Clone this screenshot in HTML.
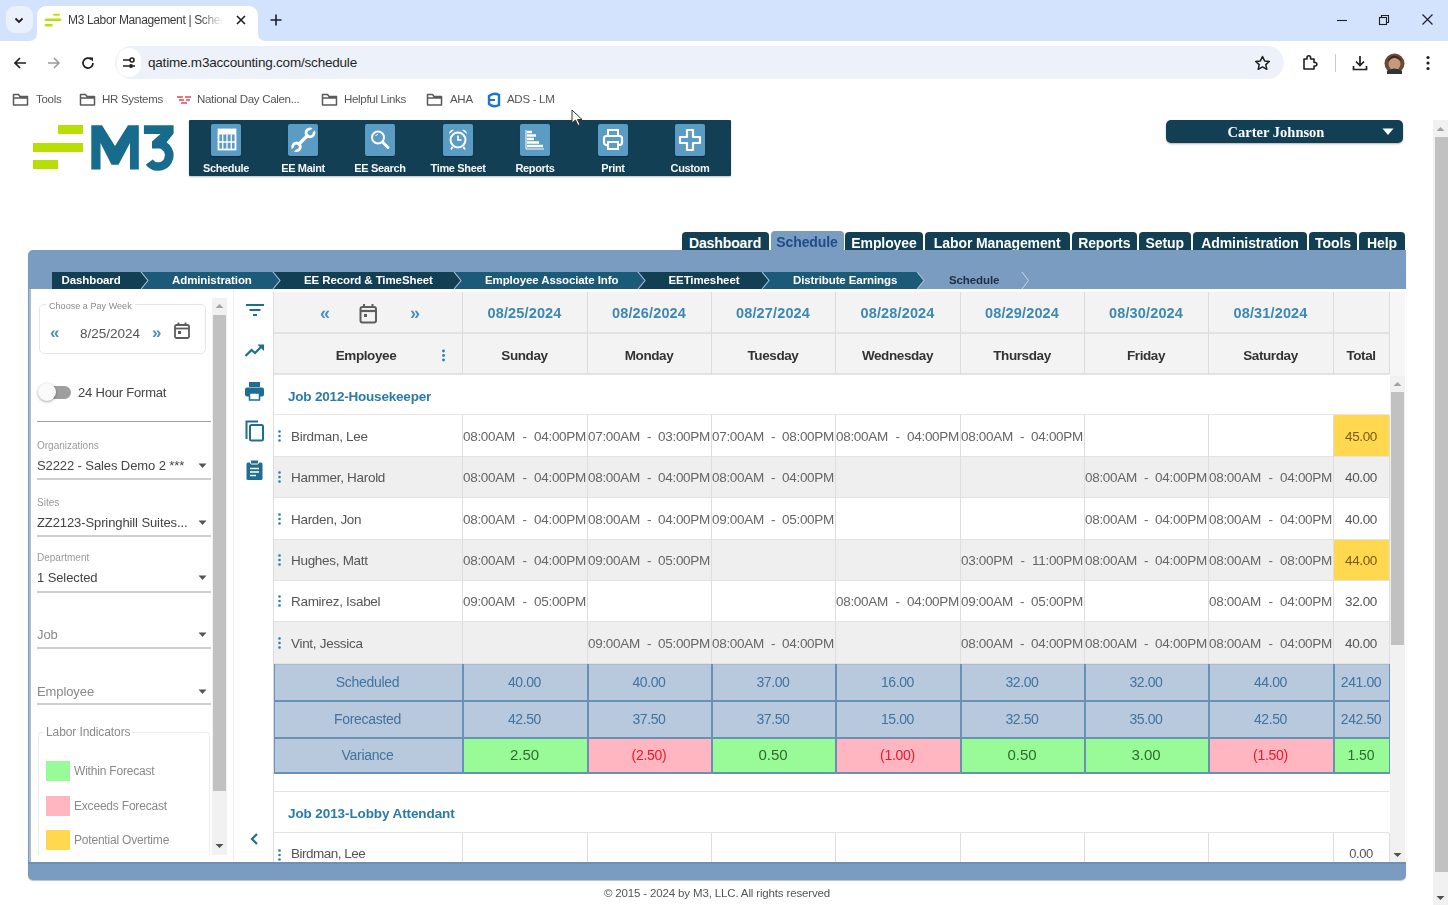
<!DOCTYPE html>
<html><head><meta charset="utf-8"><title>M3 Labor Management | Schedule</title><style>
*{box-sizing:border-box}
html,body{margin:0;padding:0}
body{width:1448px;height:905px;overflow:hidden;position:relative;background:#fff;font-family:"Liberation Sans",sans-serif;filter:blur(0.4px)}
.abs{position:absolute}
.t{white-space:nowrap}
.c{text-align:center}
.tm{display:flex;justify-content:space-between;font-size:13.5px;color:#666;letter-spacing:-0.3px;line-height:16px}
</style></head>
<body>
<div class="abs" style="left:0;top:0;width:1448px;height:41px;background:#d3e3fd"></div>
<div class="abs" style="left:6px;top:6px;width:27px;height:27px;border-radius:9px;background:#eaf0fc"></div>
<svg class="abs" style="left:12px;top:13px" width="14" height="14" viewBox="0 0 14 14"><path d="M3.5 5.5 L7 9 L10.5 5.5" fill="none" stroke="#1f1f1f" stroke-width="1.8"/></svg>
<div class="abs" style="left:37px;top:6px;width:221px;height:35px;border-radius:9px 9px 0 0;background:#fff"></div>
<svg class="abs" style="left:29px;top:33px" width="8" height="8"><path d="M0 8 Q8 8 8 0 L8 8 Z" fill="#fff"/></svg>
<svg class="abs" style="left:258px;top:33px" width="8" height="8"><path d="M8 8 Q0 8 0 0 L0 8 Z" fill="#fff"/></svg>
<svg class="abs" style="left:44px;top:12px" width="18" height="16"><rect x="9" y="1.7" width="7" height="2" rx="1" fill="#b9e00a"/><rect x="0.7" y="6.6" width="16.6" height="2.5" rx="1" fill="#b9e00a"/><rect x="0.7" y="12" width="8" height="2.5" rx="1" fill="#b9e00a"/></svg>
<div class="abs t" style="left:68px;top:13px;font-size:12px;color:#3b3b3b;letter-spacing:-0.35px;white-space:nowrap;width:155px;overflow:hidden;-webkit-mask-image:linear-gradient(90deg,#000 85%,transparent)">M3 Labor Management | Schedule</div>
<svg class="abs" style="left:235px;top:14px" width="12" height="12"><path d="M2 2 L10 10 M10 2 L2 10" stroke="#1f1f1f" stroke-width="1.6"/></svg>
<svg class="abs" style="left:269px;top:13px" width="14" height="14"><path d="M7 1.5 V12.5 M1.5 7 H12.5" stroke="#1f1f1f" stroke-width="1.6"/></svg>
<svg class="abs" style="left:1336px;top:14px" width="12" height="12"><path d="M1 6.5 H11" stroke="#1f1f1f" stroke-width="1.1"/></svg>
<svg class="abs" style="left:1378px;top:14px" width="12" height="12"><rect x="1.5" y="3.5" width="7" height="7" fill="none" stroke="#1f1f1f" stroke-width="1.1"/><path d="M3.5 3.5 V1.5 H10.5 V8.5 H8.5" fill="none" stroke="#1f1f1f" stroke-width="1.1"/></svg>
<svg class="abs" style="left:1421px;top:13px" width="13" height="13"><path d="M1.5 1.5 L11.5 11.5 M11.5 1.5 L1.5 11.5" stroke="#1f1f1f" stroke-width="1.2"/></svg>
<div class="abs" style="left:0;top:41px;width:1448px;height:43px;background:#fff"></div>
<svg class="abs" style="left:12px;top:55px" width="16" height="16"><path d="M14 8 H3 M8 3 L3 8 L8 13" fill="none" stroke="#1f1f1f" stroke-width="1.7"/></svg>
<svg class="abs" style="left:46px;top:55px" width="16" height="16"><path d="M2 8 H13 M8 3 L13 8 L8 13" fill="none" stroke="#9a9a9a" stroke-width="1.5"/></svg>
<svg class="abs" style="left:80px;top:55px" width="16" height="16"><path d="M13 8 A5 5 0 1 1 11.3 4.3" fill="none" stroke="#1f1f1f" stroke-width="1.7"/><path d="M9 2.5 L13 2.5 L13 6.5 Z" fill="#1f1f1f"/></svg>
<div class="abs" style="left:115px;top:46px;width:1169px;height:33px;border-radius:17px;background:#edf2fa"></div>
<div class="abs" style="left:117px;top:48px;width:24px;height:29px;border-radius:14px;background:#fff"></div>
<svg class="abs" style="left:121px;top:55px" width="16" height="16"><path d="M2 5 H9 M12 11 H14 M2 11 H8" stroke="#1f1f1f" stroke-width="1.6"/><circle cx="11" cy="5" r="2" fill="none" stroke="#1f1f1f" stroke-width="1.6"/><circle cx="10" cy="11" r="2" fill="#1f1f1f"/></svg>
<div class="abs t" style="left:148px;top:55px;font-size:13.5px;color:#1f1f1f;letter-spacing:-0.2px">qatime.m3accounting.com/schedule</div>
<svg class="abs" style="left:1254px;top:55px" width="17" height="16"><path d="M8.5 1.5 L10.6 5.9 L15.3 6.4 L11.8 9.6 L12.8 14.3 L8.5 11.9 L4.2 14.3 L5.2 9.6 L1.7 6.4 L6.4 5.9 Z" fill="none" stroke="#1f1f1f" stroke-width="1.5" stroke-linejoin="round"/></svg>
<svg class="abs" style="left:1301px;top:54px" width="18" height="18"><path d="M3 5 H6 V3.5 A1.8 1.8 0 0 1 9.6 3.5 V5 H13 V8.5 H14.5 A1.8 1.8 0 0 1 14.5 12 H13 V15 H3 Z" fill="none" stroke="#1f1f1f" stroke-width="1.6" stroke-linejoin="round"/></svg>
<div class="abs" style="left:1335px;top:54px;width:1px;height:18px;background:#c7cdd8"></div>
<svg class="abs" style="left:1351px;top:54px" width="18" height="18"><path d="M9 2 V11 M5 7.5 L9 11.5 L13 7.5 M2.5 12 V15.5 H15.5 V12" fill="none" stroke="#1f1f1f" stroke-width="1.7"/></svg>
<svg class="abs" style="left:1384px;top:53px" width="21" height="21"><circle cx="10.5" cy="10.5" r="10" fill="#6b4a36"/><circle cx="10.5" cy="11" r="6" fill="#c79a7a"/><path d="M4 8 Q10.5 1 17 8 L17 6 Q10.5 -1 4 6 Z" fill="#3a2a20"/><path d="M3 18 Q10.5 13 18 18 L18 21 H3 Z" fill="#2e3440"/></svg>
<svg class="abs" style="left:1424px;top:54px" width="8" height="18"><circle cx="4" cy="3.5" r="1.6" fill="#1f1f1f"/><circle cx="4" cy="9" r="1.6" fill="#1f1f1f"/><circle cx="4" cy="14.5" r="1.6" fill="#1f1f1f"/></svg>
<svg class="abs" style="left:12px;top:92px" width="17" height="15"><path d="M1.5 2.5 H6.5 L8 4.5 H15.5 V13 H1.5 Z M1.5 6 H15.5" fill="none" stroke="#5a5a5a" stroke-width="1.5" stroke-linejoin="round"/></svg>
<div class="abs t" style="left:36px;top:93px;font-size:11.5px;color:#555;letter-spacing:-0.3px;white-space:nowrap">Tools</div>
<svg class="abs" style="left:79px;top:92px" width="17" height="15"><path d="M1.5 2.5 H6.5 L8 4.5 H15.5 V13 H1.5 Z M1.5 6 H15.5" fill="none" stroke="#5a5a5a" stroke-width="1.5" stroke-linejoin="round"/></svg>
<div class="abs t" style="left:102px;top:93px;font-size:11.5px;color:#555;letter-spacing:-0.3px;white-space:nowrap">HR Systems</div>
<svg class="abs" style="left:176px;top:94px" width="16" height="12"><path d="M1 3 H7 M9 3 H15 M3 6 H8 M10 6 H14 M5 9 H11" stroke="#e8474f" stroke-width="1.6"/></svg>
<div class="abs t" style="left:197px;top:93px;font-size:11.5px;color:#555;letter-spacing:-0.3px;white-space:nowrap">National Day Calen...</div>
<svg class="abs" style="left:321px;top:92px" width="17" height="15"><path d="M1.5 2.5 H6.5 L8 4.5 H15.5 V13 H1.5 Z M1.5 6 H15.5" fill="none" stroke="#5a5a5a" stroke-width="1.5" stroke-linejoin="round"/></svg>
<div class="abs t" style="left:344px;top:93px;font-size:11.5px;color:#555;letter-spacing:-0.3px;white-space:nowrap">Helpful Links</div>
<svg class="abs" style="left:426px;top:92px" width="17" height="15"><path d="M1.5 2.5 H6.5 L8 4.5 H15.5 V13 H1.5 Z M1.5 6 H15.5" fill="none" stroke="#5a5a5a" stroke-width="1.5" stroke-linejoin="round"/></svg>
<div class="abs t" style="left:450px;top:93px;font-size:11.5px;color:#555;letter-spacing:-0.3px;white-space:nowrap">AHA</div>
<svg class="abs" style="left:486px;top:92px" width="16" height="16"><path d="M3 4 Q8 0 13 3 L13 13 Q8 16 3 12 Z" fill="none" stroke="#1976d2" stroke-width="2.4"/><path d="M3 8 H9" stroke="#1976d2" stroke-width="2"/></svg>
<div class="abs t" style="left:507px;top:93px;font-size:11.5px;color:#555;letter-spacing:-0.3px;white-space:nowrap">ADS - LM</div>
<div class="abs" style="left:1433px;top:120px;width:15px;height:785px;background:#f1f1f1"></div>
<div class="abs" style="left:1435px;top:137px;width:13px;height:735px;background:#c1c1c1"></div>
<svg class="abs" style="left:1436px;top:126px" width="9" height="6"><path d="M0.5 5 L4.5 1 L8.5 5 Z" fill="#a3a3a3"/></svg>
<svg class="abs" style="left:1436px;top:895px" width="9" height="6"><path d="M0.5 1 L4.5 5 L8.5 1 Z" fill="#505050"/></svg>
<div class="abs" style="left:58px;top:125px;width:25px;height:9px;background:#b9de05"></div>
<div class="abs" style="left:33px;top:143px;width:50px;height:9px;background:#b9de05"></div>
<div class="abs" style="left:33px;top:160px;width:25px;height:9px;background:#b9de05"></div>
<svg class="abs" style="left:85px;top:120px" width="95" height="55" viewBox="85 120 95 55"><path d="M91.3 169.4 V125.2 H102 L115 146 L128 125.2 H138.8 V169.4 H130 V143 L118.5 164.7 H111.5 L100.5 143 V169.4 Z" fill="#176b8d"/><path d="M143.9 125.2 H173.6 V133.5 L164 145.5 L158 148.5 L152 148.5 L152 141.5 L160.5 134 H143.9 Z" fill="#176b8d"/><path d="M159 144.2 A11.2 11.2 0 1 1 149.2 162.2" fill="none" stroke="#176b8d" stroke-width="8.6"/></svg>
<div class="abs" style="left:189px;top:120px;width:542px;height:56px;background:#133f55;border-radius:1px;box-shadow:0 1px 2px rgba(0,0,0,.25)"></div>
<div class="abs" style="left:211px;top:124px;width:30px;height:32px;background:#5b9cc4;border-radius:2px;box-shadow:0 1px 1px rgba(0,0,0,.35)"></div>
<svg class="abs" style="left:211px;top:125px" width="30" height="30" viewBox="0 0 30 30"><rect x="7.5" y="4.5" width="17" height="20" fill="none" stroke="#fff" stroke-width="1.8"/><rect x="7.5" y="4.5" width="17" height="5" fill="#fff"/><path d="M11.7 9.5 V24 M16 9.5 V24 M20.3 9.5 V24 M7.5 17 H24.5" stroke="#fff" stroke-width="1.3"/></svg>
<div class="abs t c" style="left:186px;top:162px;width:80px;font-size:11px;font-weight:bold;color:#f4f6f8;letter-spacing:-0.35px">Schedule</div>
<div class="abs" style="left:288px;top:124px;width:30px;height:32px;background:#5b9cc4;border-radius:2px;box-shadow:0 1px 1px rgba(0,0,0,.35)"></div>
<svg class="abs" style="left:288px;top:125px" width="30" height="30" viewBox="0 0 30 30"><path d="M10 20 L20.5 9.5" stroke="#fff" stroke-width="3.2"/><circle cx="22" cy="7.8" r="4" fill="none" stroke="#fff" stroke-width="2.8"/><path d="M22 7.8 L27 2.8" stroke="#5b9cc4" stroke-width="3.2"/><circle cx="8.5" cy="21.8" r="3.8" fill="none" stroke="#fff" stroke-width="2.8"/><path d="M8.5 21.8 L3.5 26.8" stroke="#5b9cc4" stroke-width="3.2"/></svg>
<div class="abs t c" style="left:263px;top:162px;width:80px;font-size:11px;font-weight:bold;color:#f4f6f8;letter-spacing:-0.35px">EE Maint</div>
<div class="abs" style="left:365px;top:124px;width:30px;height:32px;background:#5b9cc4;border-radius:2px;box-shadow:0 1px 1px rgba(0,0,0,.35)"></div>
<svg class="abs" style="left:365px;top:125px" width="30" height="30" viewBox="0 0 30 30"><circle cx="13" cy="12.5" r="6" fill="none" stroke="#fff" stroke-width="2"/><path d="M17.5 17 L23 22.5" stroke="#fff" stroke-width="3" stroke-linecap="round"/><path d="M10.5 11 A3 3 0 0 1 13 9.5" stroke="#fff" stroke-width="1" fill="none"/></svg>
<div class="abs t c" style="left:340px;top:162px;width:80px;font-size:11px;font-weight:bold;color:#f4f6f8;letter-spacing:-0.35px">EE Search</div>
<div class="abs" style="left:443px;top:124px;width:30px;height:32px;background:#5b9cc4;border-radius:2px;box-shadow:0 1px 1px rgba(0,0,0,.35)"></div>
<svg class="abs" style="left:443px;top:125px" width="30" height="30" viewBox="0 0 30 30"><circle cx="15" cy="15" r="7.5" fill="none" stroke="#fff" stroke-width="2"/><path d="M15 10.5 V15 H18.5" stroke="#fff" stroke-width="1.6" fill="none"/><path d="M6 9 A4 4 0 0 1 11 5 Z M24 9 A4 4 0 0 0 19 5 Z" fill="#fff"/><path d="M9.5 22 L8 24.5 M20.5 22 L22 24.5" stroke="#fff" stroke-width="1.8"/></svg>
<div class="abs t c" style="left:418px;top:162px;width:80px;font-size:11px;font-weight:bold;color:#f4f6f8;letter-spacing:-0.35px">Time Sheet</div>
<div class="abs" style="left:520px;top:124px;width:30px;height:32px;background:#5b9cc4;border-radius:2px;box-shadow:0 1px 1px rgba(0,0,0,.35)"></div>
<svg class="abs" style="left:520px;top:125px" width="30" height="30" viewBox="0 0 30 30"><path d="M7 7 H12 M7 10.5 H16 M7 14 H14 M7 17.5 H19 M7 21 H23" stroke="#fff" stroke-width="2.6"/><path d="M6 5 V24 H24" stroke="#fff" stroke-width="1" fill="none"/></svg>
<div class="abs t c" style="left:495px;top:162px;width:80px;font-size:11px;font-weight:bold;color:#f4f6f8;letter-spacing:-0.35px">Reports</div>
<div class="abs" style="left:598px;top:124px;width:30px;height:32px;background:#5b9cc4;border-radius:2px;box-shadow:0 1px 1px rgba(0,0,0,.35)"></div>
<svg class="abs" style="left:598px;top:125px" width="30" height="30" viewBox="0 0 30 30"><rect x="10" y="5" width="10" height="6" fill="none" stroke="#fff" stroke-width="2"/><rect x="6" y="11" width="18" height="9" rx="2.5" fill="none" stroke="#fff" stroke-width="2.2"/><rect x="10" y="17" width="10" height="7" fill="#5b9cc4" stroke="#fff" stroke-width="2"/></svg>
<div class="abs t c" style="left:573px;top:162px;width:80px;font-size:11px;font-weight:bold;color:#f4f6f8;letter-spacing:-0.35px">Print</div>
<div class="abs" style="left:675px;top:124px;width:30px;height:32px;background:#5b9cc4;border-radius:2px;box-shadow:0 1px 1px rgba(0,0,0,.35)"></div>
<svg class="abs" style="left:675px;top:125px" width="30" height="30" viewBox="0 0 30 30"><path d="M12 5 H18 V12 H25 V18 H18 V25 H12 V18 H5 V12 H12 Z" fill="none" stroke="#fff" stroke-width="2.2" stroke-linejoin="round"/></svg>
<div class="abs t c" style="left:650px;top:162px;width:80px;font-size:11px;font-weight:bold;color:#f4f6f8;letter-spacing:-0.35px">Custom</div>
<div class="abs" style="left:1166px;top:120px;width:237px;height:23px;background:#133f55;border-radius:5px;box-shadow:0 1px 2px rgba(0,0,0,.3)"></div>
<div class="abs t c" style="left:1166px;top:124px;width:220px;font-size:14.5px;font-weight:bold;color:#fff;font-family:'Liberation Serif',serif">Carter Johnson</div>
<svg class="abs" style="left:1382px;top:128px" width="12" height="8"><path d="M0.5 0.5 H11.5 L6 7 Z" fill="#fff"/></svg>
<div class="abs t c" style="left:681.5px;top:232px;width:87.0px;height:20px;background:#133f55;border-radius:4px 4px 0 0;font-size:14px;font-weight:bold;color:#fff;line-height:22px;letter-spacing:-0.1px">Dashboard</div>
<div class="abs t c" style="left:770.5px;top:231px;width:73.0px;height:21px;background:#7b9cc1;border-radius:4px 4px 0 0;font-size:14px;font-weight:bold;color:#1e4c8c;line-height:22px;letter-spacing:-0.1px">Schedule</div>
<div class="abs t c" style="left:845px;top:232px;width:78px;height:20px;background:#133f55;border-radius:4px 4px 0 0;font-size:14px;font-weight:bold;color:#fff;line-height:22px;letter-spacing:-0.1px">Employee</div>
<div class="abs t c" style="left:925px;top:232px;width:144.5px;height:20px;background:#133f55;border-radius:4px 4px 0 0;font-size:14px;font-weight:bold;color:#fff;line-height:22px;letter-spacing:-0.1px">Labor Management</div>
<div class="abs t c" style="left:1071.5px;top:232px;width:65.5px;height:20px;background:#133f55;border-radius:4px 4px 0 0;font-size:14px;font-weight:bold;color:#fff;line-height:22px;letter-spacing:-0.1px">Reports</div>
<div class="abs t c" style="left:1139px;top:232px;width:51.5px;height:20px;background:#133f55;border-radius:4px 4px 0 0;font-size:14px;font-weight:bold;color:#fff;line-height:22px;letter-spacing:-0.1px">Setup</div>
<div class="abs t c" style="left:1193px;top:232px;width:114px;height:20px;background:#133f55;border-radius:4px 4px 0 0;font-size:14px;font-weight:bold;color:#fff;line-height:22px;letter-spacing:-0.1px">Administration</div>
<div class="abs t c" style="left:1309px;top:232px;width:48px;height:20px;background:#133f55;border-radius:4px 4px 0 0;font-size:14px;font-weight:bold;color:#fff;line-height:22px;letter-spacing:-0.1px">Tools</div>
<div class="abs t c" style="left:1359px;top:232px;width:46px;height:20px;background:#133f55;border-radius:4px 4px 0 0;font-size:14px;font-weight:bold;color:#fff;line-height:22px;letter-spacing:-0.1px">Help</div>
<div class="abs" style="left:28px;top:250px;width:1378px;height:630px;background:#7b9cc1;border-radius:5px 0 5px 5px;box-shadow:0 1px 1px rgba(0,0,0,.25)"></div>
<div class="abs" style="left:31px;top:289px;width:1375px;height:573px;background:#fff"></div>
<div class="abs" style="left:762px;top:272px;width:162px;height:17px;background:#1c5a79;clip-path:polygon(0 0,155px 0,162px 50%,155px 100%,0 100%)"></div>
<svg class="abs" style="left:916px;top:272px" width="10" height="17"><path d="M1 0 L8 8.5 L1 17" fill="none" stroke="#a9c0d6" stroke-width="1.1"/></svg>
<div class="abs" style="left:637.5px;top:272px;width:131.5px;height:17px;background:#133f55;clip-path:polygon(0 0,124.5px 0,131.5px 50%,124.5px 100%,0 100%)"></div>
<svg class="abs" style="left:761px;top:272px" width="10" height="17"><path d="M1 0 L8 8.5 L1 17" fill="none" stroke="#a9c0d6" stroke-width="1.1"/></svg>
<div class="abs" style="left:454px;top:272px;width:190.5px;height:17px;background:#1c5a79;clip-path:polygon(0 0,183.5px 0,190.5px 50%,183.5px 100%,0 100%)"></div>
<svg class="abs" style="left:636.5px;top:272px" width="10" height="17"><path d="M1 0 L8 8.5 L1 17" fill="none" stroke="#a9c0d6" stroke-width="1.1"/></svg>
<div class="abs" style="left:273px;top:272px;width:188px;height:17px;background:#133f55;clip-path:polygon(0 0,181px 0,188px 50%,181px 100%,0 100%)"></div>
<svg class="abs" style="left:453px;top:272px" width="10" height="17"><path d="M1 0 L8 8.5 L1 17" fill="none" stroke="#a9c0d6" stroke-width="1.1"/></svg>
<div class="abs" style="left:141px;top:272px;width:139px;height:17px;background:#1c5a79;clip-path:polygon(0 0,132px 0,139px 50%,132px 100%,0 100%)"></div>
<svg class="abs" style="left:272px;top:272px" width="10" height="17"><path d="M1 0 L8 8.5 L1 17" fill="none" stroke="#a9c0d6" stroke-width="1.1"/></svg>
<div class="abs" style="left:52px;top:272px;width:96px;height:17px;background:#133f55;clip-path:polygon(0 0,89px 0,96px 50%,89px 100%,0 100%)"></div>
<svg class="abs" style="left:140px;top:272px" width="10" height="17"><path d="M1 0 L8 8.5 L1 17" fill="none" stroke="#a9c0d6" stroke-width="1.1"/></svg>
<div class="abs t" style="left:61.5px;top:274px;font-size:11.5px;font-weight:bold;color:#fff;letter-spacing:-0.1px;line-height:13px">Dashboard</div>
<div class="abs t" style="left:172px;top:274px;font-size:11.5px;font-weight:bold;color:#fff;letter-spacing:-0.1px;line-height:13px">Administration</div>
<div class="abs t" style="left:304px;top:274px;font-size:11.5px;font-weight:bold;color:#fff;letter-spacing:-0.1px;line-height:13px">EE Record &amp; TimeSheet</div>
<div class="abs t" style="left:485px;top:274px;font-size:11.5px;font-weight:bold;color:#fff;letter-spacing:-0.1px;line-height:13px">Employee Associate Info</div>
<div class="abs t" style="left:668.5px;top:274px;font-size:11.5px;font-weight:bold;color:#fff;letter-spacing:-0.1px;line-height:13px">EETimesheet</div>
<div class="abs t" style="left:793px;top:274px;font-size:11.5px;font-weight:bold;color:#fff;letter-spacing:-0.1px;line-height:13px">Distribute Earnings</div>
<div class="abs t" style="left:949px;top:274px;font-size:11.5px;font-weight:bold;color:#1f2f3f;letter-spacing:-0.1px;line-height:13px">Schedule</div>
<svg class="abs" style="left:1021px;top:272px" width="10" height="17"><path d="M1 0 L7.5 8.5 L1 17" fill="none" stroke="#c9d8e6" stroke-width="1"/></svg>
<div class="abs" style="left:28px;top:862px;width:1378px;height:2px;background:#6f8fb3"></div>
<div class="abs t c" style="left:0;top:887px;width:1434px;font-size:11.5px;color:#555;letter-spacing:-0.15px">&copy; 2015 - 2024 by M3, LLC. All rights reserved</div>
<div class="abs" style="left:29px;top:289px;width:2px;height:573px;background:#a9bccf"></div>
<div class="abs" style="left:39px;top:304px;width:167px;height:50px;border:1px solid #e6e6e6;border-radius:5px"></div>
<div class="abs t" style="left:46px;top:300px;padding:0 3px;background:#fff;font-size:9px;color:#8a8a8a;letter-spacing:0.05px;line-height:12px">Choose a Pay Week</div>
<div class="abs t" style="left:50px;top:323px;font-size:17px;font-weight:bold;color:#4a90b8;line-height:20px">&laquo;</div>
<div class="abs t" style="left:80px;top:326px;font-size:13.5px;color:#555;letter-spacing:0px;line-height:16px">8/25/2024</div>
<div class="abs t" style="left:152px;top:323px;font-size:17px;font-weight:bold;color:#4a90b8;line-height:20px">&raquo;</div>
<svg class="abs" style="left:173px;top:321px" width="18" height="19"><rect x="2" y="4" width="14" height="13" rx="1.5" fill="none" stroke="#5c5c5c" stroke-width="1.8"/><path d="M2 7.5 H16" stroke="#5c5c5c" stroke-width="1.8"/><path d="M5.5 1.5 V5 M12.5 1.5 V5" stroke="#5c5c5c" stroke-width="1.8"/><rect x="5" y="10" width="3" height="3" fill="#5c5c5c"/></svg>
<div class="abs" style="left:42px;top:386px;width:29px;height:13px;border-radius:7px;background:#9e9e9e"></div>
<div class="abs" style="left:38px;top:383px;width:18px;height:18px;border-radius:50%;background:#fafafa;box-shadow:0 1px 3px rgba(0,0,0,.35)"></div>
<div class="abs t" style="left:78px;top:385px;font-size:13px;color:#444;letter-spacing:-0.2px;line-height:16px">24 Hour Format</div>
<div class="abs" style="left:37px;top:421px;width:174px;height:1px;background:#a0a0a0"></div>
<div class="abs t" style="left:37px;top:440px;font-size:10px;color:#9a9a9a;letter-spacing:0px;line-height:12px">Organizations</div>
<div class="abs t" style="left:37px;top:458px;font-size:13px;color:#444;letter-spacing:-0.1px;line-height:16px;white-space:nowrap">S2222 - Sales Demo 2 ***</div>
<svg class="abs" style="left:198px;top:463px" width="9" height="6"><path d="M0.5 0.5 H8.5 L4.5 5 Z" fill="#555"/></svg>
<div class="abs" style="left:37px;top:478px;width:174px;height:2px;background:#cfcfcf"></div>
<div class="abs t" style="left:37px;top:497px;font-size:10px;color:#9a9a9a;letter-spacing:0px;line-height:12px">Sites</div>
<div class="abs t" style="left:37px;top:515px;font-size:13px;color:#444;letter-spacing:-0.1px;line-height:16px;white-space:nowrap">ZZ2123-Springhill Suites...</div>
<svg class="abs" style="left:198px;top:520px" width="9" height="6"><path d="M0.5 0.5 H8.5 L4.5 5 Z" fill="#555"/></svg>
<div class="abs" style="left:37px;top:535px;width:174px;height:2px;background:#cfcfcf"></div>
<div class="abs t" style="left:37px;top:552px;font-size:10px;color:#9a9a9a;letter-spacing:0px;line-height:12px">Department</div>
<div class="abs t" style="left:37px;top:570px;font-size:13px;color:#444;letter-spacing:-0.1px;line-height:16px;white-space:nowrap">1 Selected</div>
<svg class="abs" style="left:198px;top:575px" width="9" height="6"><path d="M0.5 0.5 H8.5 L4.5 5 Z" fill="#555"/></svg>
<div class="abs" style="left:37px;top:591px;width:174px;height:2px;background:#cfcfcf"></div>
<div class="abs t" style="left:37px;top:627px;font-size:13px;color:#888;letter-spacing:-0.1px;line-height:16px;white-space:nowrap">Job</div>
<svg class="abs" style="left:198px;top:632px" width="9" height="6"><path d="M0.5 0.5 H8.5 L4.5 5 Z" fill="#555"/></svg>
<div class="abs" style="left:37px;top:647px;width:174px;height:2px;background:#cfcfcf"></div>
<div class="abs t" style="left:37px;top:684px;font-size:13px;color:#888;letter-spacing:-0.1px;line-height:16px;white-space:nowrap">Employee</div>
<svg class="abs" style="left:198px;top:689px" width="9" height="6"><path d="M0.5 0.5 H8.5 L4.5 5 Z" fill="#555"/></svg>
<div class="abs" style="left:37px;top:703px;width:174px;height:2px;background:#cfcfcf"></div>
<div class="abs" style="left:38px;top:732px;width:172px;height:124px;border:1px solid #ececec;border-bottom:none;border-radius:4px 4px 0 0"></div>
<div class="abs t" style="left:44px;top:725px;padding:0 2px;background:#fff;font-size:12px;color:#8a8a8a;letter-spacing:-0.1px;line-height:14px">Labor Indicators</div>
<div class="abs" style="left:46px;top:761px;width:24px;height:20px;background:#98fb98"></div>
<div class="abs t" style="left:74px;top:764px;font-size:12px;color:#8a8a8a;letter-spacing:-0.2px;line-height:14px">Within Forecast</div>
<div class="abs" style="left:46px;top:796px;width:24px;height:20px;background:#ffb6c1"></div>
<div class="abs t" style="left:74px;top:799px;font-size:12px;color:#8a8a8a;letter-spacing:-0.2px;line-height:14px">Exceeds Forecast</div>
<div class="abs" style="left:46px;top:830px;width:24px;height:20px;background:#ffd84f"></div>
<div class="abs t" style="left:74px;top:833px;font-size:12px;color:#8a8a8a;letter-spacing:-0.2px;line-height:14px">Potential Overtime</div>
<div class="abs" style="left:31px;top:855px;width:202px;height:7px;background:#fff"></div>
<div class="abs" style="left:212px;top:298px;width:15px;height:557px;background:#f1f1f1"></div>
<div class="abs" style="left:213px;top:315px;width:13px;height:476px;background:#c1c1c1"></div>
<svg class="abs" style="left:215px;top:303px" width="9" height="6"><path d="M0.5 5 L4.5 1 L8.5 5 Z" fill="#a3a3a3"/></svg>
<svg class="abs" style="left:215px;top:843px" width="9" height="6"><path d="M0.5 1 L4.5 5 L8.5 1 Z" fill="#505050"/></svg>
<div class="abs" style="left:233px;top:289px;width:1px;height:573px;background:#eeeeee"></div>
<svg class="abs" style="left:245px;top:302px" width="20" height="18"><path d="M1 3 H19" stroke="#1f6e91" stroke-width="2"/><path d="M4.5 8 H15.5" stroke="#1f6e91" stroke-width="2"/><path d="M8 13 H12" stroke="#1f6e91" stroke-width="2"/></svg>
<svg class="abs" style="left:244px;top:342px" width="22" height="16"><path d="M1.5 14 L7.5 8 L11 11 L18 4" fill="none" stroke="#1f6e91" stroke-width="2.2"/><path d="M13.5 2.5 H20 V9 Z" fill="#1f6e91"/></svg>
<svg class="abs" style="left:244px;top:381px" width="21" height="20"><rect x="5" y="1" width="11" height="5" fill="#1f6e91"/><rect x="1" y="6.5" width="19" height="9" rx="2" fill="#1f6e91"/><rect x="5.5" y="12" width="10" height="7" fill="#fff" stroke="#1f6e91" stroke-width="1.5"/></svg>
<svg class="abs" style="left:244px;top:420px" width="21" height="22"><path d="M2.5 19 V1.5 H14" fill="none" stroke="#1f6e91" stroke-width="2"/><rect x="6" y="5" width="13" height="15.5" rx="1.5" fill="none" stroke="#1f6e91" stroke-width="2"/></svg>
<svg class="abs" style="left:245px;top:459px" width="19" height="22"><rect x="1.5" y="3.5" width="16" height="17.5" rx="1.5" fill="#1f6e91"/><rect x="5.5" y="1" width="8" height="4" rx="1" fill="#1f6e91" stroke="#fff" stroke-width="1"/><path d="M5 9.5 H14 M5 13 H14 M5 16.5 H11" stroke="#fff" stroke-width="1.6"/></svg>
<svg class="abs" style="left:249px;top:832px" width="10" height="14"><path d="M8 2 L3 7 L8 12" fill="none" stroke="#1f6e91" stroke-width="2.2"/></svg>
<div class="abs" style="left:273px;top:292px;width:1116px;height:82px;background:#f3f3f3"></div>
<div class="abs t" style="left:320px;top:303px;font-size:18px;font-weight:bold;color:#4a90b8;line-height:20px">&laquo;</div>
<svg class="abs" style="left:359px;top:303px" width="19" height="21"><rect x="1.5" y="4" width="15.5" height="15.5" rx="2" fill="none" stroke="#5e5e5e" stroke-width="2"/><path d="M1.5 8 H17" stroke="#5e5e5e" stroke-width="2.2"/><path d="M5 1 V5 M13.5 1 V5" stroke="#5e5e5e" stroke-width="2"/><rect x="5" y="11" width="3" height="3" fill="#5e5e5e"/></svg>
<div class="abs t" style="left:410px;top:303px;font-size:18px;font-weight:bold;color:#4a90b8;line-height:20px">&raquo;</div>
<div class="abs t c" style="left:462px;top:305px;width:125px;font-size:14.5px;font-weight:bold;color:#3d88b3;letter-spacing:0.15px;line-height:17px">08/25/2024</div>
<div class="abs t c" style="left:462px;top:347px;width:125px;font-size:13.5px;font-weight:bold;color:#333;letter-spacing:-0.4px;line-height:17px">Sunday</div>
<div class="abs t c" style="left:587px;top:305px;width:124px;font-size:14.5px;font-weight:bold;color:#3d88b3;letter-spacing:0.15px;line-height:17px">08/26/2024</div>
<div class="abs t c" style="left:587px;top:347px;width:124px;font-size:13.5px;font-weight:bold;color:#333;letter-spacing:-0.4px;line-height:17px">Monday</div>
<div class="abs t c" style="left:711px;top:305px;width:124px;font-size:14.5px;font-weight:bold;color:#3d88b3;letter-spacing:0.15px;line-height:17px">08/27/2024</div>
<div class="abs t c" style="left:711px;top:347px;width:124px;font-size:13.5px;font-weight:bold;color:#333;letter-spacing:-0.4px;line-height:17px">Tuesday</div>
<div class="abs t c" style="left:835px;top:305px;width:125px;font-size:14.5px;font-weight:bold;color:#3d88b3;letter-spacing:0.15px;line-height:17px">08/28/2024</div>
<div class="abs t c" style="left:835px;top:347px;width:125px;font-size:13.5px;font-weight:bold;color:#333;letter-spacing:-0.4px;line-height:17px">Wednesday</div>
<div class="abs t c" style="left:960px;top:305px;width:124px;font-size:14.5px;font-weight:bold;color:#3d88b3;letter-spacing:0.15px;line-height:17px">08/29/2024</div>
<div class="abs t c" style="left:960px;top:347px;width:124px;font-size:13.5px;font-weight:bold;color:#333;letter-spacing:-0.4px;line-height:17px">Thursday</div>
<div class="abs t c" style="left:1084px;top:305px;width:124px;font-size:14.5px;font-weight:bold;color:#3d88b3;letter-spacing:0.15px;line-height:17px">08/30/2024</div>
<div class="abs t c" style="left:1084px;top:347px;width:124px;font-size:13.5px;font-weight:bold;color:#333;letter-spacing:-0.4px;line-height:17px">Friday</div>
<div class="abs t c" style="left:1208px;top:305px;width:125px;font-size:14.5px;font-weight:bold;color:#3d88b3;letter-spacing:0.15px;line-height:17px">08/31/2024</div>
<div class="abs t c" style="left:1208px;top:347px;width:125px;font-size:13.5px;font-weight:bold;color:#333;letter-spacing:-0.4px;line-height:17px">Saturday</div>
<div class="abs t c" style="left:1333px;top:347px;width:56px;font-size:13.5px;font-weight:bold;color:#333;letter-spacing:-0.4px;line-height:17px">Total</div>
<div class="abs t c" style="left:273px;top:347px;width:186px;font-size:13.5px;font-weight:bold;color:#333;letter-spacing:-0.4px;line-height:17px">Employee</div>
<svg class="abs" style="left:441px;top:349px" width="5" height="13"><circle cx="2.5" cy="2" r="1.4" fill="#2f7fab"/><circle cx="2.5" cy="6.5" r="1.4" fill="#2f7fab"/><circle cx="2.5" cy="11" r="1.4" fill="#2f7fab"/></svg>
<div class="abs" style="left:273px;top:332px;width:1116px;height:2px;background:#e2e2e2"></div>
<div class="abs" style="left:273px;top:373px;width:1116px;height:2px;background:#e2e2e2"></div>
<div class="abs" style="left:462px;top:292px;width:1px;height:82px;background:#dcdcdc"></div>
<div class="abs" style="left:587px;top:292px;width:1px;height:82px;background:#dcdcdc"></div>
<div class="abs" style="left:711px;top:292px;width:1px;height:82px;background:#dcdcdc"></div>
<div class="abs" style="left:835px;top:292px;width:1px;height:82px;background:#dcdcdc"></div>
<div class="abs" style="left:960px;top:292px;width:1px;height:82px;background:#dcdcdc"></div>
<div class="abs" style="left:1084px;top:292px;width:1px;height:82px;background:#dcdcdc"></div>
<div class="abs" style="left:1208px;top:292px;width:1px;height:82px;background:#dcdcdc"></div>
<div class="abs" style="left:1333px;top:292px;width:1px;height:82px;background:#dcdcdc"></div>
<div class="abs" style="left:1389px;top:292px;width:1px;height:82px;background:#dcdcdc"></div>
<div class="abs t" style="left:288px;top:388px;font-size:13.5px;font-weight:bold;color:#2b7aa9;letter-spacing:-0.2px;line-height:17px">Job 2012-Housekeeper</div>
<div class="abs" style="left:273px;top:414px;width:1116px;height:1px;background:#e6e6e6"></div>
<div class="abs" style="left:273px;top:415px;width:1116px;height:42px;background:#ffffff"></div>
<div class="abs" style="left:1333px;top:415px;width:56px;height:42px;background:#ffd84f"></div>
<svg class="abs" style="left:277px;top:429px" width="5" height="14"><circle cx="2.5" cy="2.5" r="1.3" fill="#2f7fab"/><circle cx="2.5" cy="7" r="1.3" fill="#2f7fab"/><circle cx="2.5" cy="11.5" r="1.3" fill="#2f7fab"/></svg>
<div class="abs t" style="left:291px;top:428px;font-size:13.5px;color:#555;letter-spacing:-0.3px;line-height:17px">Birdman, Lee</div>
<div class="abs t tm" style="left:463px;top:429px;width:123px"><span>08:00AM</span><span>-</span><span>04:00PM</span></div>
<div class="abs t tm" style="left:588px;top:429px;width:122px"><span>07:00AM</span><span>-</span><span>03:00PM</span></div>
<div class="abs t tm" style="left:712px;top:429px;width:122px"><span>07:00AM</span><span>-</span><span>08:00PM</span></div>
<div class="abs t tm" style="left:836px;top:429px;width:123px"><span>08:00AM</span><span>-</span><span>04:00PM</span></div>
<div class="abs t tm" style="left:961px;top:429px;width:122px"><span>08:00AM</span><span>-</span><span>04:00PM</span></div>
<div class="abs t c" style="left:1333px;top:429px;width:56px;font-size:13.5px;color:#7a5a10;letter-spacing:-0.4px;line-height:16px">45.00</div>
<div class="abs" style="left:273px;top:456px;width:1116px;height:1px;background:#e3e3e3"></div>
<div class="abs" style="left:273px;top:457px;width:1116px;height:41px;background:#efefef"></div>
<svg class="abs" style="left:277px;top:470px" width="5" height="14"><circle cx="2.5" cy="2.5" r="1.3" fill="#2f7fab"/><circle cx="2.5" cy="7" r="1.3" fill="#2f7fab"/><circle cx="2.5" cy="11.5" r="1.3" fill="#2f7fab"/></svg>
<div class="abs t" style="left:291px;top:469px;font-size:13.5px;color:#555;letter-spacing:-0.3px;line-height:17px">Hammer, Harold</div>
<div class="abs t tm" style="left:463px;top:470px;width:123px"><span>08:00AM</span><span>-</span><span>04:00PM</span></div>
<div class="abs t tm" style="left:588px;top:470px;width:122px"><span>08:00AM</span><span>-</span><span>04:00PM</span></div>
<div class="abs t tm" style="left:712px;top:470px;width:122px"><span>08:00AM</span><span>-</span><span>04:00PM</span></div>
<div class="abs t tm" style="left:1085px;top:470px;width:122px"><span>08:00AM</span><span>-</span><span>04:00PM</span></div>
<div class="abs t tm" style="left:1209px;top:470px;width:123px"><span>08:00AM</span><span>-</span><span>04:00PM</span></div>
<div class="abs t c" style="left:1333px;top:470px;width:56px;font-size:13.5px;color:#555;letter-spacing:-0.4px;line-height:16px">40.00</div>
<div class="abs" style="left:273px;top:497px;width:1116px;height:1px;background:#e3e3e3"></div>
<div class="abs" style="left:273px;top:498px;width:1116px;height:42px;background:#ffffff"></div>
<svg class="abs" style="left:277px;top:512px" width="5" height="14"><circle cx="2.5" cy="2.5" r="1.3" fill="#2f7fab"/><circle cx="2.5" cy="7" r="1.3" fill="#2f7fab"/><circle cx="2.5" cy="11.5" r="1.3" fill="#2f7fab"/></svg>
<div class="abs t" style="left:291px;top:511px;font-size:13.5px;color:#555;letter-spacing:-0.3px;line-height:17px">Harden, Jon</div>
<div class="abs t tm" style="left:463px;top:512px;width:123px"><span>08:00AM</span><span>-</span><span>04:00PM</span></div>
<div class="abs t tm" style="left:588px;top:512px;width:122px"><span>08:00AM</span><span>-</span><span>04:00PM</span></div>
<div class="abs t tm" style="left:712px;top:512px;width:122px"><span>09:00AM</span><span>-</span><span>05:00PM</span></div>
<div class="abs t tm" style="left:1085px;top:512px;width:122px"><span>08:00AM</span><span>-</span><span>04:00PM</span></div>
<div class="abs t tm" style="left:1209px;top:512px;width:123px"><span>08:00AM</span><span>-</span><span>04:00PM</span></div>
<div class="abs t c" style="left:1333px;top:512px;width:56px;font-size:13.5px;color:#555;letter-spacing:-0.4px;line-height:16px">40.00</div>
<div class="abs" style="left:273px;top:539px;width:1116px;height:1px;background:#e3e3e3"></div>
<div class="abs" style="left:273px;top:540px;width:1116px;height:41px;background:#efefef"></div>
<div class="abs" style="left:1333px;top:540px;width:56px;height:41px;background:#ffd84f"></div>
<svg class="abs" style="left:277px;top:553px" width="5" height="14"><circle cx="2.5" cy="2.5" r="1.3" fill="#2f7fab"/><circle cx="2.5" cy="7" r="1.3" fill="#2f7fab"/><circle cx="2.5" cy="11.5" r="1.3" fill="#2f7fab"/></svg>
<div class="abs t" style="left:291px;top:552px;font-size:13.5px;color:#555;letter-spacing:-0.3px;line-height:17px">Hughes, Matt</div>
<div class="abs t tm" style="left:463px;top:553px;width:123px"><span>08:00AM</span><span>-</span><span>04:00PM</span></div>
<div class="abs t tm" style="left:588px;top:553px;width:122px"><span>09:00AM</span><span>-</span><span>05:00PM</span></div>
<div class="abs t tm" style="left:961px;top:553px;width:122px"><span>03:00PM</span><span>-</span><span>11:00PM</span></div>
<div class="abs t tm" style="left:1085px;top:553px;width:122px"><span>08:00AM</span><span>-</span><span>04:00PM</span></div>
<div class="abs t tm" style="left:1209px;top:553px;width:123px"><span>08:00AM</span><span>-</span><span>08:00PM</span></div>
<div class="abs t c" style="left:1333px;top:553px;width:56px;font-size:13.5px;color:#7a5a10;letter-spacing:-0.4px;line-height:16px">44.00</div>
<div class="abs" style="left:273px;top:580px;width:1116px;height:1px;background:#e3e3e3"></div>
<div class="abs" style="left:273px;top:581px;width:1116px;height:41px;background:#ffffff"></div>
<svg class="abs" style="left:277px;top:594px" width="5" height="14"><circle cx="2.5" cy="2.5" r="1.3" fill="#2f7fab"/><circle cx="2.5" cy="7" r="1.3" fill="#2f7fab"/><circle cx="2.5" cy="11.5" r="1.3" fill="#2f7fab"/></svg>
<div class="abs t" style="left:291px;top:593px;font-size:13.5px;color:#555;letter-spacing:-0.3px;line-height:17px">Ramirez, Isabel</div>
<div class="abs t tm" style="left:463px;top:594px;width:123px"><span>09:00AM</span><span>-</span><span>05:00PM</span></div>
<div class="abs t tm" style="left:836px;top:594px;width:123px"><span>08:00AM</span><span>-</span><span>04:00PM</span></div>
<div class="abs t tm" style="left:961px;top:594px;width:122px"><span>09:00AM</span><span>-</span><span>05:00PM</span></div>
<div class="abs t tm" style="left:1209px;top:594px;width:123px"><span>08:00AM</span><span>-</span><span>04:00PM</span></div>
<div class="abs t c" style="left:1333px;top:594px;width:56px;font-size:13.5px;color:#555;letter-spacing:-0.4px;line-height:16px">32.00</div>
<div class="abs" style="left:273px;top:621px;width:1116px;height:1px;background:#e3e3e3"></div>
<div class="abs" style="left:273px;top:622px;width:1116px;height:42px;background:#efefef"></div>
<svg class="abs" style="left:277px;top:636px" width="5" height="14"><circle cx="2.5" cy="2.5" r="1.3" fill="#2f7fab"/><circle cx="2.5" cy="7" r="1.3" fill="#2f7fab"/><circle cx="2.5" cy="11.5" r="1.3" fill="#2f7fab"/></svg>
<div class="abs t" style="left:291px;top:635px;font-size:13.5px;color:#555;letter-spacing:-0.3px;line-height:17px">Vint, Jessica</div>
<div class="abs t tm" style="left:588px;top:636px;width:122px"><span>09:00AM</span><span>-</span><span>05:00PM</span></div>
<div class="abs t tm" style="left:712px;top:636px;width:122px"><span>08:00AM</span><span>-</span><span>04:00PM</span></div>
<div class="abs t tm" style="left:961px;top:636px;width:122px"><span>08:00AM</span><span>-</span><span>04:00PM</span></div>
<div class="abs t tm" style="left:1085px;top:636px;width:122px"><span>08:00AM</span><span>-</span><span>04:00PM</span></div>
<div class="abs t tm" style="left:1209px;top:636px;width:123px"><span>08:00AM</span><span>-</span><span>04:00PM</span></div>
<div class="abs t c" style="left:1333px;top:636px;width:56px;font-size:13.5px;color:#555;letter-spacing:-0.4px;line-height:16px">40.00</div>
<div class="abs" style="left:273px;top:663px;width:1116px;height:1px;background:#e3e3e3"></div>
<div class="abs" style="left:462px;top:415px;width:1px;height:249px;background:#dedede"></div>
<div class="abs" style="left:587px;top:415px;width:1px;height:249px;background:#dedede"></div>
<div class="abs" style="left:711px;top:415px;width:1px;height:249px;background:#dedede"></div>
<div class="abs" style="left:835px;top:415px;width:1px;height:249px;background:#dedede"></div>
<div class="abs" style="left:960px;top:415px;width:1px;height:249px;background:#dedede"></div>
<div class="abs" style="left:1084px;top:415px;width:1px;height:249px;background:#dedede"></div>
<div class="abs" style="left:1208px;top:415px;width:1px;height:249px;background:#dedede"></div>
<div class="abs" style="left:1333px;top:415px;width:1px;height:249px;background:#dedede"></div>
<div class="abs" style="left:1389px;top:415px;width:1px;height:249px;background:#dedede"></div>
<div class="abs" style="left:273px;top:664px;width:1116px;height:110px;background:#b8c9dd"></div>
<div class="abs t c" style="left:462px;top:674px;width:125px;font-size:14px;color:#3f73a0;letter-spacing:-0.4px;line-height:16px">40.00</div>
<div class="abs t c" style="left:587px;top:674px;width:124px;font-size:14px;color:#3f73a0;letter-spacing:-0.4px;line-height:16px">40.00</div>
<div class="abs t c" style="left:711px;top:674px;width:124px;font-size:14px;color:#3f73a0;letter-spacing:-0.4px;line-height:16px">37.00</div>
<div class="abs t c" style="left:835px;top:674px;width:125px;font-size:14px;color:#3f73a0;letter-spacing:-0.4px;line-height:16px">16.00</div>
<div class="abs t c" style="left:960px;top:674px;width:124px;font-size:14px;color:#3f73a0;letter-spacing:-0.4px;line-height:16px">32.00</div>
<div class="abs t c" style="left:1084px;top:674px;width:124px;font-size:14px;color:#3f73a0;letter-spacing:-0.4px;line-height:16px">32.00</div>
<div class="abs t c" style="left:1208px;top:674px;width:125px;font-size:14px;color:#3f73a0;letter-spacing:-0.4px;line-height:16px">44.00</div>
<div class="abs t c" style="left:1333px;top:674px;width:56px;font-size:14px;color:#3f73a0;letter-spacing:-0.4px;line-height:16px">241.00</div>
<div class="abs t c" style="left:273px;top:674px;width:189px;font-size:14px;color:#3f73a0;letter-spacing:-0.3px;line-height:16px">Scheduled</div>
<div class="abs t c" style="left:462px;top:711px;width:125px;font-size:14px;color:#3f73a0;letter-spacing:-0.4px;line-height:16px">42.50</div>
<div class="abs t c" style="left:587px;top:711px;width:124px;font-size:14px;color:#3f73a0;letter-spacing:-0.4px;line-height:16px">37.50</div>
<div class="abs t c" style="left:711px;top:711px;width:124px;font-size:14px;color:#3f73a0;letter-spacing:-0.4px;line-height:16px">37.50</div>
<div class="abs t c" style="left:835px;top:711px;width:125px;font-size:14px;color:#3f73a0;letter-spacing:-0.4px;line-height:16px">15.00</div>
<div class="abs t c" style="left:960px;top:711px;width:124px;font-size:14px;color:#3f73a0;letter-spacing:-0.4px;line-height:16px">32.50</div>
<div class="abs t c" style="left:1084px;top:711px;width:124px;font-size:14px;color:#3f73a0;letter-spacing:-0.4px;line-height:16px">35.00</div>
<div class="abs t c" style="left:1208px;top:711px;width:125px;font-size:14px;color:#3f73a0;letter-spacing:-0.4px;line-height:16px">42.50</div>
<div class="abs t c" style="left:1333px;top:711px;width:56px;font-size:14px;color:#3f73a0;letter-spacing:-0.4px;line-height:16px">242.50</div>
<div class="abs t c" style="left:273px;top:711px;width:189px;font-size:14px;color:#3f73a0;letter-spacing:-0.3px;line-height:16px">Forecasted</div>
<div class="abs" style="left:462px;top:738px;width:125px;height:35px;background:#98fb98"></div>
<div class="abs t c" style="left:462px;top:746px;width:125px;font-size:15px;color:#2e6b2e;letter-spacing:0px;line-height:18px">2.50</div>
<div class="abs" style="left:587px;top:738px;width:124px;height:35px;background:#ffb6c1"></div>
<div class="abs t c" style="left:587px;top:746px;width:124px;font-size:14px;color:#e8192c;letter-spacing:-0.3px;line-height:18px">(2.50)</div>
<div class="abs" style="left:711px;top:738px;width:124px;height:35px;background:#98fb98"></div>
<div class="abs t c" style="left:711px;top:746px;width:124px;font-size:15px;color:#2e6b2e;letter-spacing:0px;line-height:18px">0.50</div>
<div class="abs" style="left:835px;top:738px;width:125px;height:35px;background:#ffb6c1"></div>
<div class="abs t c" style="left:835px;top:746px;width:125px;font-size:14px;color:#e8192c;letter-spacing:-0.3px;line-height:18px">(1.00)</div>
<div class="abs" style="left:960px;top:738px;width:124px;height:35px;background:#98fb98"></div>
<div class="abs t c" style="left:960px;top:746px;width:124px;font-size:15px;color:#2e6b2e;letter-spacing:0px;line-height:18px">0.50</div>
<div class="abs" style="left:1084px;top:738px;width:124px;height:35px;background:#98fb98"></div>
<div class="abs t c" style="left:1084px;top:746px;width:124px;font-size:15px;color:#2e6b2e;letter-spacing:0px;line-height:18px">3.00</div>
<div class="abs" style="left:1208px;top:738px;width:125px;height:35px;background:#ffb6c1"></div>
<div class="abs t c" style="left:1208px;top:746px;width:125px;font-size:14px;color:#e8192c;letter-spacing:-0.3px;line-height:18px">(1.50)</div>
<div class="abs" style="left:1333px;top:738px;width:56px;height:35px;background:#98fb98"></div>
<div class="abs t c" style="left:1333px;top:746px;width:56px;font-size:14px;color:#2e6b2e;letter-spacing:0px;line-height:18px">1.50</div>
<div class="abs t c" style="left:273px;top:747px;width:189px;font-size:14px;color:#3f73a0;letter-spacing:-0.3px;line-height:16px">Variance</div>
<div class="abs" style="left:273px;top:700px;width:1116px;height:2px;background:#6891b6"></div>
<div class="abs" style="left:273px;top:737px;width:1116px;height:2px;background:#6891b6"></div>
<div class="abs" style="left:273px;top:772px;width:1116px;height:2px;background:#6891b6"></div>
<div class="abs" style="left:273px;top:664px;width:1116px;height:1px;background:#a9bdd3"></div>
<div class="abs" style="left:273px;top:664px;width:2px;height:110px;background:#6891b6"></div>
<div class="abs" style="left:462px;top:664px;width:2px;height:110px;background:#6891b6"></div>
<div class="abs" style="left:587px;top:664px;width:2px;height:110px;background:#6891b6"></div>
<div class="abs" style="left:711px;top:664px;width:2px;height:110px;background:#6891b6"></div>
<div class="abs" style="left:835px;top:664px;width:2px;height:110px;background:#6891b6"></div>
<div class="abs" style="left:960px;top:664px;width:2px;height:110px;background:#6891b6"></div>
<div class="abs" style="left:1084px;top:664px;width:2px;height:110px;background:#6891b6"></div>
<div class="abs" style="left:1208px;top:664px;width:2px;height:110px;background:#6891b6"></div>
<div class="abs" style="left:1333px;top:664px;width:2px;height:110px;background:#6891b6"></div>
<div class="abs" style="left:1389px;top:664px;width:2px;height:110px;background:#6891b6"></div>
<div class="abs" style="left:273px;top:791px;width:1116px;height:1px;background:#e3e3e3"></div>
<div class="abs t" style="left:288px;top:805px;font-size:13.5px;font-weight:bold;color:#2b7aa9;letter-spacing:-0.1px;line-height:17px">Job 2013-Lobby Attendant</div>
<div class="abs" style="left:273px;top:832px;width:1116px;height:1px;background:#e3e3e3"></div>
<div class="abs" style="left:462px;top:833px;width:1px;height:29px;background:#dedede"></div>
<div class="abs" style="left:587px;top:833px;width:1px;height:29px;background:#dedede"></div>
<div class="abs" style="left:711px;top:833px;width:1px;height:29px;background:#dedede"></div>
<div class="abs" style="left:835px;top:833px;width:1px;height:29px;background:#dedede"></div>
<div class="abs" style="left:960px;top:833px;width:1px;height:29px;background:#dedede"></div>
<div class="abs" style="left:1084px;top:833px;width:1px;height:29px;background:#dedede"></div>
<div class="abs" style="left:1208px;top:833px;width:1px;height:29px;background:#dedede"></div>
<div class="abs" style="left:1333px;top:833px;width:1px;height:29px;background:#dedede"></div>
<div class="abs" style="left:1389px;top:833px;width:1px;height:29px;background:#dedede"></div>
<svg class="abs" style="left:277px;top:848px" width="5" height="14"><circle cx="2.5" cy="2.5" r="1.3" fill="#2f7fab"/><circle cx="2.5" cy="7" r="1.3" fill="#2f7fab"/><circle cx="2.5" cy="11.5" r="1.3" fill="#2f7fab"/></svg>
<div class="abs t" style="left:291px;top:845px;font-size:13.5px;color:#555;letter-spacing:-0.5px;line-height:17px">Birdman, Lee</div>
<div class="abs t c" style="left:1333px;top:846px;width:56px;font-size:13px;color:#555;letter-spacing:-0.5px;line-height:16px">0.00</div>
<div class="abs" style="left:273px;top:292px;width:1px;height:570px;background:#dddddd"></div>
<div class="abs" style="left:1390px;top:292px;width:15px;height:84px;background:#f6f6f6"></div>
<div class="abs" style="left:1390px;top:376px;width:15px;height:486px;background:#f1f1f1"></div>
<div class="abs" style="left:1391px;top:392px;width:13px;height:253px;background:#c1c1c1"></div>
<svg class="abs" style="left:1393px;top:381px" width="9" height="6"><path d="M0.5 5 L4.5 1 L8.5 5 Z" fill="#a3a3a3"/></svg>
<svg class="abs" style="left:1393px;top:852px" width="9" height="6"><path d="M0.5 1 L4.5 5 L8.5 1 Z" fill="#505050"/></svg>
<svg class="abs" style="left:571px;top:109px;z-index:5" width="12" height="18"><path d="M1 1 L1 14 L4.5 11 L7 16.5 L9 15.5 L6.5 10.5 L11 10.5 Z" fill="#fff" stroke="#333" stroke-width="1"/></svg>
</body></html>
